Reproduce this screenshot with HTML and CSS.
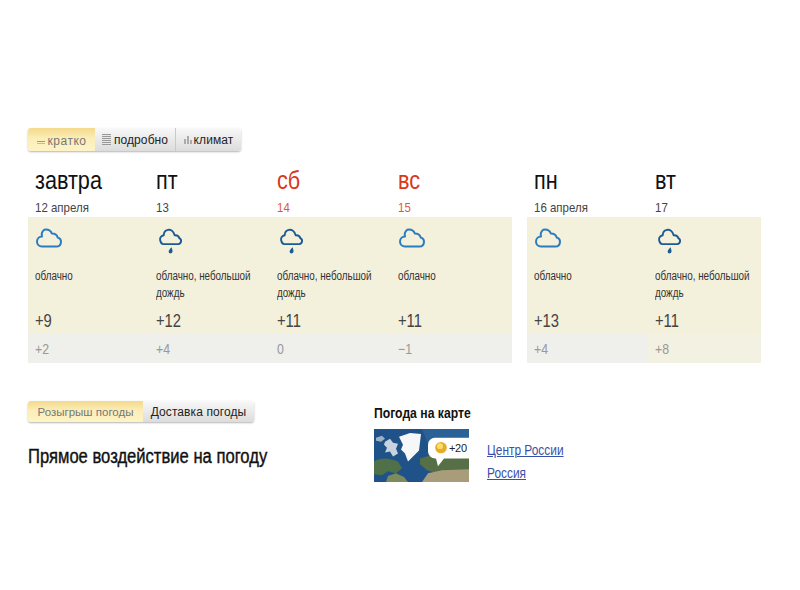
FILE: index.html
```html
<!DOCTYPE html>
<html lang="ru">
<head>
<meta charset="utf-8">
<title>Погода</title>
<link rel="stylesheet" href="styles.css">
</head>
<body>
<svg class="defs" width="0" height="0" aria-hidden="true">
  <symbol id="cloud" viewBox="0 0 28 22">
    <path d="M7 19.500h14.500a4.600 4.600 0 0 0 1.200-9A5.800 5.800 0 0 0 17 6.600 7 7 0 0 0 9.200 2.800 6.500 6.500 0 0 0 7 9.600a5 5 0 0 0-5 4.900 5 5 0 0 0 5 5z" fill="none" stroke="#2a7cc0" stroke-width="2" stroke-linejoin="round"/>
  </symbol>
  <symbol id="rain" viewBox="0 0 24 28">
    <path d="M5 16.500H19.500a3 3 0 0 0 1-5.700c-.5-2-2.500-3-4.500-2.800C15 4 12 2.300 9.500 2.800 7 3.300 5.500 5.500 5.500 8 3 8.500 1.500 10.500 2 12.800 2.500 15 4 16.500 5 16.500z" fill="none" stroke="#1c5a94" stroke-width="1.800" stroke-linejoin="round"/>
    <path d="M13 19.500c.5 1.800 1 2.800 1 4a2 2 0 0 1-2 2 1.800 1.800 0 0 1-1.800-1.800c0-1.500 1.600-2.800 2.800-4.200z" fill="#1c5a94"/>
  </symbol>
</svg>
<main class="page">
  <nav class="tabs">
    <span class="tab on tab-short"><span class="ico-short"></span>кратко</span>
    <span class="tab tab-more"><span class="ico-lines"></span>подробно</span>
    <span class="tab tab-clim"><span class="ico-bars"><i></i><i></i><i></i></span>климат</span>
  </nav>

  <section class="forecast">
    <div class="week">
      <article class="day">
        <header class="head"><div class="name">завтра</div><div class="date">12 апреля</div></header>
        <div class="body"><svg class="cloud"><use href="#cloud"/></svg><p class="cond">облачно</p><div class="hi">+9</div></div>
        <div class="lo"><span class="lo-val">+2</span></div>
      </article>
      <article class="day">
        <header class="head"><div class="name">пт</div><div class="date">13</div></header>
        <div class="body"><svg class="rain"><use href="#rain"/></svg><p class="cond">облачно, небольшой дождь</p><div class="hi">+12</div></div>
        <div class="lo"><span class="lo-val">+4</span></div>
      </article>
      <article class="day off">
        <header class="head"><div class="name">сб</div><div class="date">14</div></header>
        <div class="body"><svg class="rain"><use href="#rain"/></svg><p class="cond">облачно, небольшой дождь</p><div class="hi">+11</div></div>
        <div class="lo"><span class="lo-val">0</span></div>
      </article>
      <article class="day off">
        <header class="head"><div class="name">вс</div><div class="date">15</div></header>
        <div class="body"><svg class="cloud"><use href="#cloud"/></svg><p class="cond">облачно</p><div class="hi">+11</div></div>
        <div class="lo"><span class="lo-val">−1</span></div>
      </article>
    </div>
    <div class="week">
      <article class="day">
        <header class="head"><div class="name">пн</div><div class="date">16 апреля</div></header>
        <div class="body"><svg class="cloud"><use href="#cloud"/></svg><p class="cond">облачно</p><div class="hi">+13</div></div>
        <div class="lo"><span class="lo-val">+4</span></div>
      </article>
      <article class="day last">
        <header class="head"><div class="name">вт</div><div class="date">17</div></header>
        <div class="body"><svg class="rain"><use href="#rain"/></svg><p class="cond">облачно, небольшой дождь</p><div class="hi">+11</div></div>
        <div class="lo"><span class="lo-val">+8</span></div>
      </article>
    </div>
  </section>

  <section class="bottom">
    <div class="left">
      <nav class="tabs tabs-b">
        <span class="tab on tab-draw">Розыгрыш погоды</span>
        <span class="tab tab-deliv">Доставка погоды</span>
      </nav>
      <h2 class="title">Прямое воздействие на погоду</h2>
    </div>
    <div class="right">
      <h3 class="map-title">Погода на карте</h3>
      <div class="map-row">
        <div class="map">
          <svg width="95" height="53" viewBox="0 0 95 54" preserveAspectRatio="none">
            <rect width="95" height="54" fill="#1f5288"/>
            <path d="M48 0h47v9H62l-8 6z" fill="#2a6298"/>
            <path d="M0 33c8-5 16-3 24 0l4 7-6 5-8-2-6 4-8-1z" fill="#4f7048"/>
            <path d="M46 30l10-3 39 1v15l-30 3-12-4-7-6z" fill="#566f46"/>
            <path d="M48 54l6-9 14-3 27-1v13z" fill="#a89c7a"/>
            <path d="M14 48l8-3 8 4 4 5H12z" fill="#7d8a5c"/>
            <path d="M11 13l5-3 3 4 5 1-2 5 2 5-5 3-3-5-5 1 2-5-3-3z" fill="#c9d3df"/>
            <path d="M2 9l6-2 3 3-4 3-5-1z" fill="#9fb0c4"/>
            <path d="M25 8l11-4 11 1-2 17-6 6-5 5-3-8-4-4 2-5z" fill="#f5f7f9"/>
            <path d="M54 16a7 7 0 0 1 7-7h34v21H70l-6 8-2-8a7 7 0 0 1-8-7z" fill="#fff"/>
            <circle cx="67" cy="19" r="5.800" fill="#e8ad28"/>
            <circle cx="66" cy="17.500" r="3" fill="#fbdd6e"/>
          </svg>
          <span class="map-temp">+20</span>
        </div>
        <ul class="links">
          <li><a href="#">Центр России</a></li>
          <li><a href="#">Россия</a></li>
        </ul>
      </div>
    </div>
  </section>
</main>
</body>
</html>
```
FILE: styles.css
```css
* { box-sizing: border-box; }
html, body { margin: 0; padding: 0; background: #fff; }
body { width: 800px; height: 590px; overflow: hidden; font-family: "Liberation Sans", Arial, sans-serif; color: #1a1a1a; }
.defs { position: absolute; }
.page { padding: 128px 0 0 28px; }

.tabs { display: flex; height: 23px; width: max-content; border-radius: 3px; box-shadow: 0 1px 2px #b5b5b5; }
.tab { display: flex; align-items: center; justify-content: center; font-size: 12px; letter-spacing: 0.1px; color: #222; background: linear-gradient(#f8f8f8, #dcdcdc); border-right: 1px solid #c9c9c9; }
.tab:last-child { border-right: 0; border-radius: 0 3px 3px 0; }
.tab.on { background: linear-gradient(#f3d98a, #fbeeb8 45%, #fdf3c6); color: #777; border-radius: 3px 0 0 3px; border-right: 0; letter-spacing: 0.5px; }
.tab-short { width: 67px; padding-top: 2px; }
.tab-more { width: 81px; }
.tab-clim { width: 65px; }
.ico-short { width: 8px; height: 3px; margin-right: 3px; margin-top: 3px; border-top: 1px solid #999; border-bottom: 1px solid #bbb; }
.ico-lines { width: 9px; height: 11px; margin-right: 3px; background: repeating-linear-gradient(#999 0 1px, #e8e8e8 1px 2px); }
.ico-bars { display: flex; align-items: flex-end; gap: 1px; height: 8px; margin-right: 2px; }
.ico-bars i { width: 2px; background: #aaa; height: 5px; }
.ico-bars i:nth-child(2) { height: 8px; }
.ico-bars i:nth-child(3) { height: 4px; }

.forecast { display: flex; gap: 15px; margin-top: 14px; }
.week { display: flex; }
.day { width: 121px; }
.day.last { width: 113px; }
.head { height: 52px; padding-left: 7px; }
.name { font-size: 25px; line-height: 30px; color: #111; transform: scaleX(.865); transform-origin: left; }
.date { font-size: 13.500px; line-height: 20px; color: #444; margin-top: 3px; transform: scaleX(.85); transform-origin: left; }
.off .name { color: #d8391b; }
.off .date { color: #d95a3e; }
.body { height: 117px; background: #f3f0dc; padding: 10px 7px 0; position: relative; display: flex; flex-direction: column; }
.cloud { width: 28px; height: 22px; display: block; }
.rain { width: 25px; height: 29px; margin-left: 2px; display: block; }
.cond { position: absolute; top: 51px; left: 7px; width: 122px; margin: 0; font-size: 12px; line-height: 17px; color: #333; transform: scaleX(.82); transform-origin: left; }
.hi { position: absolute; top: 93px; left: 7px; font-size: 18px; line-height: 22px; color: #444; transform: scaleX(.82); transform-origin: left; }
.lo { height: 29px; background: #efefec; padding: 7px 0 0 7px; font-size: 14.500px; line-height: 17px; color: #999; }
.lo-val { display: inline-block; transform: scaleX(.85); transform-origin: left; }
.last .lo { background: #f3f1e2; }

.bottom { display: flex; margin-top: 38px; }
.left { width: 346px; }
.tabs-b { height: 21px; }
.tab-draw { width: 115px; font-size: 11.500px; }
.tab.on.tab-draw { letter-spacing: 0; }
.tab-deliv { width: 111px; }
.title { margin: 22px 0 0; font-size: 20px; line-height: 24px; font-weight: 400; color: #111; -webkit-text-stroke: 0.4px #111; white-space: nowrap; transform: scaleX(.83); transform-origin: left; }
.right { padding-top: 3px; }
.map-title { margin: 0; font-size: 14.500px; line-height: 18px; font-weight: 700; color: #111; white-space: nowrap; transform: scaleX(.84); transform-origin: left; }
.map-row { display: flex; margin-top: 7px; }
.map { position: relative; width: 95px; height: 53px; }
.map svg { display: block; }
.map-temp { position: absolute; left: 75px; top: 12px; font-size: 11px; line-height: 14px; letter-spacing: -0.3px; color: #222; }
.links { list-style: none; margin: 10px 0 0 18px; padding: 0; font-size: 14.500px; line-height: 23px; }
.links a { display: inline-block; color: #3a4fa8; transform: scaleX(.82); transform-origin: left; }
```
